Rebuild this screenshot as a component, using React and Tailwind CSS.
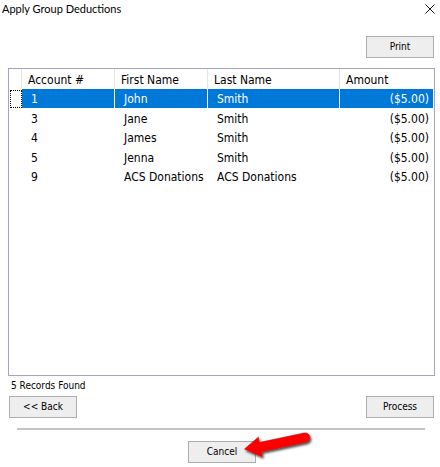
const COLUMNS = ['Account #', 'First Name', 'Last Name', 'Amount']

const RECORDS = [
  { account: '1', first: 'John', last: 'Smith', amount: '($5.00)' },
  { account: '3', first: 'Jane', last: 'Smith', amount: '($5.00)' },
  { account: '4', first: 'James', last: 'Smith', amount: '($5.00)' },
  { account: '5', first: 'Jenna', last: 'Smith', amount: '($5.00)' },
  { account: '9', first: 'ACS Donations', last: 'ACS Donations', amount: '($5.00)' },
]

const CELL = 'p-0 pl-[9px]'
const SELECTED_CELL = 'border-r border-b border-white bg-[#0078d7] p-0 pt-px pl-[9px]'

function DialogButton({ children }) {
  return (
    <button
      type="button"
      className="h-[22px] w-[68px] shrink-0 border border-[#adadad] bg-[#eeeeee] text-[10px] leading-4 text-black"
    >
      {children}
    </button>
  )
}

function CloseIcon() {
  return (
    <svg width="10" height="10" viewBox="0 0 10 10" fill="none" stroke="#1a1a1a" strokeWidth="1">
      <path d="M0.5 0.5 9.5 9.5M9.5 0.5 0.5 9.5" />
    </svg>
  )
}

function PointerArrow() {
  return (
    <svg
      className="absolute -top-[10px] left-[56px] z-10"
      width="76"
      height="34"
      viewBox="0 0 76 34"
      aria-hidden="true"
    >
      <defs>
        <filter id="arrow-shadow" x="-10%" y="-20%" width="130%" height="160%">
          <feDropShadow dx="1.5" dy="2" stdDeviation="1" floodColor="#000" floodOpacity="0.7" />
        </filter>
      </defs>
      <path
        d="M0.500 18 14.500 6 15 11.500 60 2Q65 1.500 65.500 5.500Q66 10 62 11L17.500 20.500 18 25.500Z"
        fill="#fa0606"
        stroke="#e00000"
        strokeWidth="0.6"
        strokeLinejoin="round"
        filter="url(#arrow-shadow)"
      />
    </svg>
  )
}

function RecordRow({ record, selected }) {
  const cell = selected ? SELECTED_CELL : CELL

  return (
    <tr className={selected ? 'h-5 text-white' : 'h-5 even:h-[19px]'}>
      <td className="p-0">
        {selected && <div className="ml-px h-[18px] w-3 border border-dotted border-black" />}
      </td>
      <td className={cell}>{record.account}</td>
      <td className={cell}>{record.first}</td>
      <td className={cell}>{record.last}</td>
      <td
        className={
          selected
            ? 'border-b border-white bg-[#0078d7] p-0 pt-px pr-1 text-right'
            : 'p-0 pr-1 text-right'
        }
      >
        {record.amount}
      </td>
    </tr>
  )
}

export default function App() {
  return (
    <main className="min-h-screen bg-white pr-[5px] font-['DejaVu_Sans_Condensed','DejaVu_Sans',sans-serif] text-black">
      <header className="flex h-[18px] items-center justify-between pl-0.5">
        <h1 className="font-[Lato,sans-serif] text-[11px] leading-4">Apply Group Deductions</h1>
        <button type="button" aria-label="Close">
          <CloseIcon />
        </button>
      </header>

      <div className="mt-[18px] flex justify-end pr-px">
        <DialogButton>Print</DialogButton>
      </div>

      <section className="mt-2.5 ml-2 min-h-[308px] border border-[#a5a3bd] pr-px">
        <table className="w-full table-fixed border-separate border-spacing-0 text-xs leading-4">
          <colgroup>
            <col className="w-[13px]" />
            <col className="w-[93px]" />
            <col className="w-[93px]" />
            <col />
            <col className="w-[93px]" />
          </colgroup>
          <thead>
            <tr className="h-5">
              <td className="border-r border-[#e5e5e5] p-0" />
              {COLUMNS.map((name) => (
                <th
                  key={name}
                  scope="col"
                  className="border-r border-[#e5e5e5] p-0 pt-0.5 pl-1.5 text-left font-normal last:border-r-0"
                >
                  {name}
                </th>
              ))}
            </tr>
          </thead>
          <tbody>
            {RECORDS.map((record, index) => (
              <RecordRow key={record.account} record={record} selected={index === 0} />
            ))}
          </tbody>
        </table>
      </section>

      <p className="ml-[11px] pt-0.5 text-[10px] leading-4">5 Records Found</p>

      <div className="mt-0.5 ml-[9px] flex justify-between pr-px">
        <DialogButton>&lt;&lt; Back</DialogButton>
        <DialogButton>Process</DialogButton>
      </div>

      <hr className="mt-2.5 mr-[10px] ml-[17px] border-t-2 border-[#c3c3c3]" />

      <div className="mt-[11px] ml-[9px] flex justify-center">
        <div className="relative flex">
          <DialogButton>Cancel</DialogButton>
          <PointerArrow />
        </div>
      </div>
    </main>
  )
}
